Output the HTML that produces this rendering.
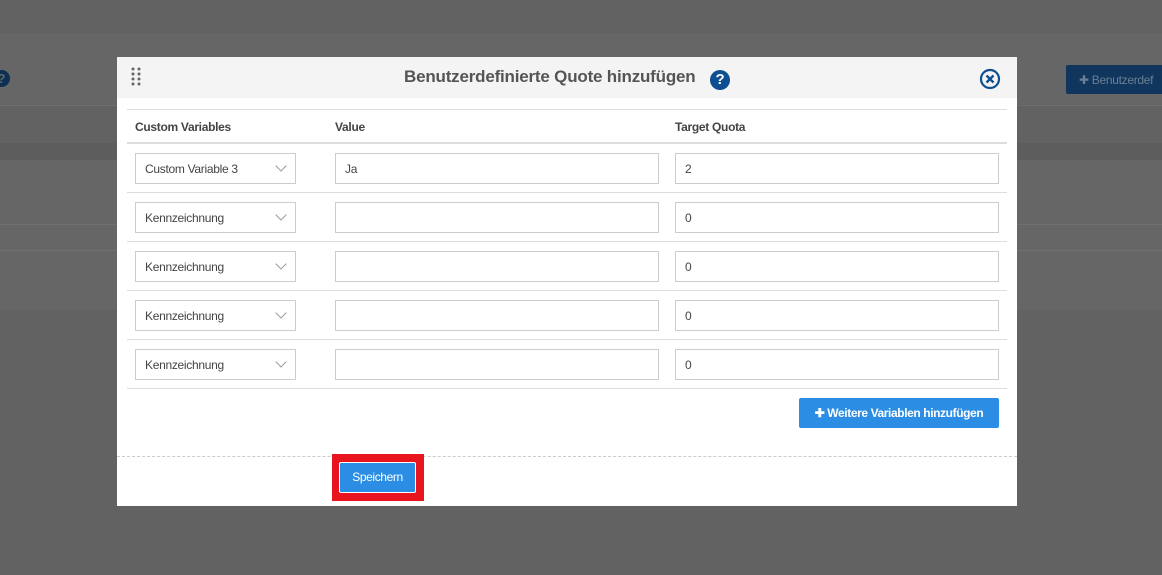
<!DOCTYPE html>
<html><head><meta charset="utf-8"><style>
*{box-sizing:border-box;margin:0;padding:0}
body{width:1162px;height:575px;overflow:hidden;background:#626262;font-family:"Liberation Sans",sans-serif;position:relative;color:#444}
.abs{position:absolute}
.modal{left:117px;top:57px;width:900px;height:449px;background:#fff}
.hdr{left:0;top:0;width:900px;height:41px;background:#f4f4f4}
.title{left:0;width:900px;top:10px;text-align:center;font-size:17px;font-weight:bold;color:#555;letter-spacing:-0.2px}
.th{font-size:12px;font-weight:bold;color:#444;top:63px;letter-spacing:-0.3px}
.line{left:10px;width:880px;height:1px;background:#ddd}
.inp{height:31px;border:1px solid #ccc;background:#fff;font-size:12px;color:#444;padding:8px 0 0 9px;letter-spacing:-0.3px}
.sel{left:18px;width:161px}
.val{left:218px;width:324px}
.q{left:558px;width:324px}
.chev{position:absolute;right:10px;top:8px;width:8px;height:8px;border-right:1px solid #999;border-bottom:1px solid #999;transform:rotate(45deg)}
.btn{background:#2b8ee4;color:#fff;font-size:12px;border-radius:2px;text-align:center;letter-spacing:-0.4px}
</style></head><body>
<div class="abs" style="left:0;top:33px;width:1162px;height:24px;background:#666"></div>
<div class="abs" style="left:0;top:57px;width:1162px;height:48px;background:#666"></div>
<div class="abs" style="left:0;top:105px;width:1162px;height:1px;background:#6e6e6e"></div>
<div class="abs" style="left:0;top:143px;width:1162px;height:17px;background:#5d5d5d"></div>
<div class="abs" style="left:0;top:160px;width:1162px;height:150px;background:#666"></div>
<div class="abs" style="left:0;top:224px;width:1162px;height:1px;background:#707070"></div>
<div class="abs" style="left:0;top:250px;width:1162px;height:1px;background:#707070"></div>
<div class="abs" style="left:-7px;top:70px;width:17px;height:17px;border-radius:50%;background:#0d2f52;color:#666;font-size:13px;font-weight:bold;text-align:center;line-height:17px">?</div>
<div class="abs" style="left:1066px;top:65px;width:100px;height:29px;background:#10365e;border-radius:2px;color:#6b7f94;font-size:12px;padding:8px 0 0 13px;letter-spacing:-0.3px;white-space:nowrap">✚ Benutzerdef</div>

<div class="abs modal">
 <div class="abs hdr"></div>
 <svg class="abs" style="left:14px;top:10px" width="12" height="20"><g fill="#666"><circle cx="2" cy="2" r="1.5"/><circle cx="8" cy="2" r="1.5"/><circle cx="2" cy="7" r="1.5"/><circle cx="8" cy="7" r="1.5"/><circle cx="2" cy="12" r="1.5"/><circle cx="8" cy="12" r="1.5"/><circle cx="2" cy="17" r="1.5"/><circle cx="8" cy="17" r="1.5"/></g></svg>
 <div class="abs title">Benutzerdefinierte Quote hinzufügen <span style="display:inline-block;width:20px;height:20px;border-radius:50%;background:#0e4f91;color:#fff;font-size:15px;line-height:20px;vertical-align:-2px;margin-left:10px">?</span></div>
 <svg class="abs" style="left:862px;top:11px" width="22" height="22"><circle cx="11" cy="11" r="9" fill="none" stroke="#0e4f91" stroke-width="2.2"/><path d="M7.5 7.5l7 7M14.5 7.5l-7 7" stroke="#0e4f91" stroke-width="2.4"/></svg>
 <div class="abs line" style="top:52px"></div>
 <div class="abs th" style="left:18px">Custom Variables</div>
 <div class="abs th" style="left:218px">Value</div>
 <div class="abs th" style="left:558px">Target Quota</div>
 <div class="abs line" style="top:85px;height:2px"></div>

 <div class="abs inp sel" style="top:96px">Custom Variable 3<span class="chev"></span></div>
 <div class="abs inp val" style="top:96px">Ja</div>
 <div class="abs inp q" style="top:96px">2</div>
 <div class="abs line" style="top:135px"></div>

 <div class="abs inp sel" style="top:145px">Kennzeichnung<span class="chev"></span></div>
 <div class="abs inp val" style="top:145px"></div>
 <div class="abs inp q" style="top:145px">0</div>
 <div class="abs line" style="top:184px"></div>

 <div class="abs inp sel" style="top:194px">Kennzeichnung<span class="chev"></span></div>
 <div class="abs inp val" style="top:194px"></div>
 <div class="abs inp q" style="top:194px">0</div>
 <div class="abs line" style="top:233px"></div>

 <div class="abs inp sel" style="top:243px">Kennzeichnung<span class="chev"></span></div>
 <div class="abs inp val" style="top:243px"></div>
 <div class="abs inp q" style="top:243px">0</div>
 <div class="abs line" style="top:282px"></div>

 <div class="abs inp sel" style="top:292px">Kennzeichnung<span class="chev"></span></div>
 <div class="abs inp val" style="top:292px"></div>
 <div class="abs inp q" style="top:292px">0</div>
 <div class="abs line" style="top:331px"></div>

 <div class="abs btn" style="left:682px;top:341px;width:200px;height:30px;line-height:30px;font-weight:bold;white-space:nowrap">✚ Weitere Variablen hinzufügen</div>
 <div class="abs" style="left:0;top:399px;width:900px;border-top:1px dashed #ccc"></div>
 <div class="abs" style="left:215px;top:397px;width:92px;height:47px;background:#e8151f"></div>
 <div class="abs btn" style="left:222px;top:405px;width:77px;height:31px;line-height:29px;border:1px solid #fff">Speichern</div>
</div>
</body></html>
